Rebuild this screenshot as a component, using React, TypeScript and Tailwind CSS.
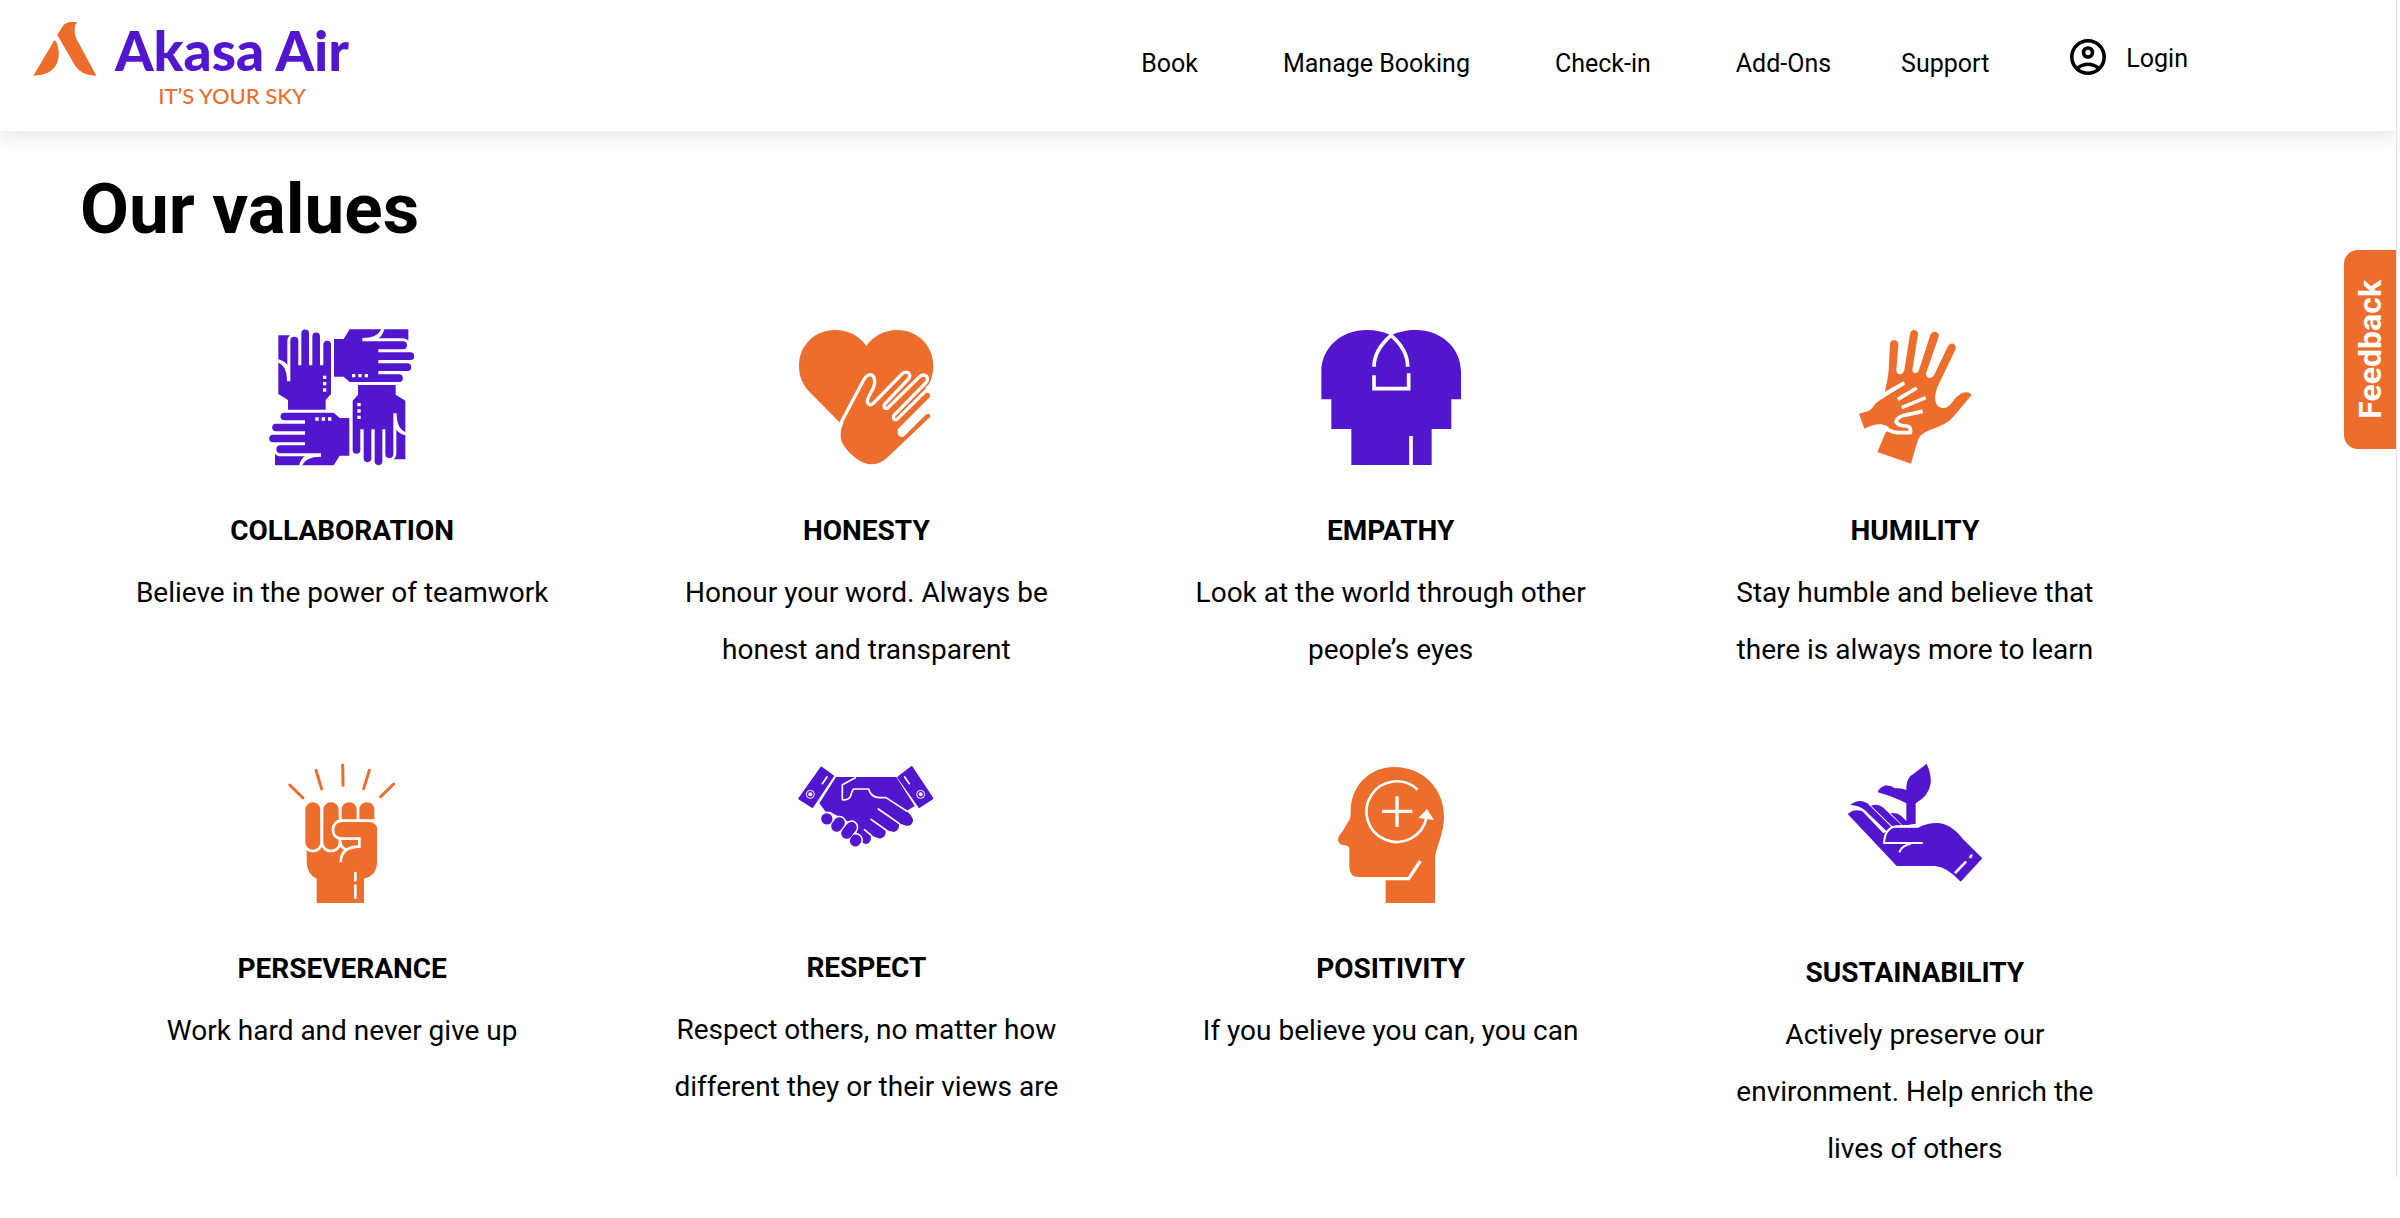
import type { ReactNode } from 'react';

const PURPLE = '#5316cf';
const ORANGE = '#ed6e2c';

const navLinks = ['Book', 'Manage Booking', 'Check-in', 'Add-Ons'];

const HandUp = ({ transform }: { transform?: string }) => (
    <g transform={transform}>
        <path d="M118 92a12 12 0 0 1 24 0V166H151V70a11.500 11.500 0 0 1 23 0V166H184V79a11.500 11.500 0 0 1 23 0V166H217V104a11.500 11.500 0 0 1 23 0V252L224 270V299H111V270L82 252V158Q108 168 108 214H118Z" />
        <path d="M82 76H117Q109 82 109 95V165Q100 153 82 148Z" />
        <path fill="#fff" d="M216 197h10v10h-10zM216 216h10v10h-10zM216 235h10v10h-10z" />
    </g>
);

const CollaborationIcon = () => (
    <svg viewBox="3 0 540 510" className="h-[170px] w-[180px]" fill={PURPLE} aria-hidden="true">
        <HandUp />
        <HandUp transform="rotate(90 286 262)" />
        <HandUp transform="rotate(180 272.5 262)" />
        <HandUp transform="rotate(-90 272 276)" />
    </svg>
);

const HonestyIcon = () => (
    <svg viewBox="-12 0 540 510" className="h-[170px] w-[180px]" fill={ORANGE} aria-hidden="true">
        <path d="M57 168C57 105 105 60 165 60C207 60 239 79 259 108C279 79 312 60 352 60C412 60 460 106 460 168C460 190 455 207 447 222L340 320L180 338L88 245C67 224 57 198 57 168Z" />
        <path d="M190 340L252 212L300 270L377 200L432 205L440 248Q453 248 450 261L353 358Q350 384 370 381L437 314Q450 306 451 320L318 446Q275 480 230 446Q180 408 182 374Q182 355 190 340Z" />
        <path
            fill="none"
            stroke="#fff"
            strokeWidth="10"
            strokeLinejoin="round"
            d="M182 340L251 210Q260 194 273 194Q285 198 284 218C283 240 261 258 262 275Q267 291 281 279L364 194Q374 182 386 189Q393 197 385 207L313 284Q309 295 321 296L416 203Q428 190 440 199Q446 209 437 219L341 317Q338 331 350 329L446 234"
        />
    </svg>
);

const EmpathyIcon = () => (
    <svg viewBox="0 0 540 510" className="h-[170px] w-[180px]" fill={PURPLE} aria-hidden="true">
        <path d="M61 268V185C61 112 122 60 197 60C225 60 250 66 270 76C290 66 317 60 345 60C418 60 480 112 480 185V268H451V357H392V465H151V357H91V268Z" />
        <g fill="none" stroke="#fff" strokeWidth="11">
            <path d="M219 170C219 134 238 104 270 76C303 104 320 134 320 170M219 196V236H323V190M330 378V466" />
        </g>
    </svg>
);

const HumilityIcon = () => (
    <svg viewBox="-15 0 540 510" className="h-[170px] w-[180px]" fill={ORANGE} aria-hidden="true">
        <path d="M142 426L168 365L164 247Q174 205 176 180L180 102Q182 90 192 90Q205 91 205 104L199 180Q200 193 210 193Q220 192 223 180L240 72Q243 59 253 60Q264 62 264 73L247 180Q248 190 256 190Q263 190 267 180L301 74Q307 63 318 66Q328 70 326 80L288 190Q288 204 300 204Q308 204 312 196L354 108Q362 98 372 102Q380 109 376 119L325 225C306 268 318 294 340 294Q355 294 367 276Q390 245 410 247Q420 248 425 254Q400 285 366 325Q350 343 300 360Q268 372 263 392L243 461Z" />
        <path fill="#fff" d="M140 262L164 247L222 214L224 224L165 262L180 340L170 366L140 366Z" />
        <path d="M87 311L118 302Q127 295 138 279Q150 270 165 261L215 232L260 300L220 340L240 362L190 362Q170 343 148 343Q130 343 103 356Z" />
        <g fill="none" stroke="#fff" strokeWidth="11">
            <path d="M164 252L222 219M203 268L260 234M215 293L287 263" />
            <path strokeLinejoin="round" d="M148 348Q165 350 178 361Q190 368 205 368H241Q244 350 230 348Q205 348 198 336Q200 322 222 316L278 304" />
        </g>
    </svg>
);

const PerseveranceIcon = () => (
    <svg viewBox="-27 0 540 504" className="h-[168px] w-[180px]" fill={ORANGE} aria-hidden="true">
        <g stroke={ORANGE} strokeWidth="9" strokeLinecap="round">
            <path d="M86 105L126 144M165 61L182 117M245 45L246 106M325 61L308 116M398 102L359 140" />
        </g>
        <path d="M137 292H245V217H325Q348 218 348 240V335Q348 376 309 386V459H167V386Q137 372 137 335Z" />
        <g stroke="#fff" strokeWidth="8">
            <rect x="129" y="153" width="53" height="150" rx="26" />
            <rect x="183" y="153" width="54" height="150" rx="26" />
            <path d="M238 213V179a26 26 0 0 1 53 0V213ZM291 213V179a26 26 0 0 1 53 0V213Z" />
        </g>
        <path d="M340 213H242Q216 216 216 240Q216 264 242 266H348V240Q347 217 325 217Z" />
        <path d="M238 268H300V310L248 300Z" />
        <path fill="none" stroke="#fff" strokeWidth="8" d="M341 212H242Q216 215 216 240Q216 263 240 266H295V290Q240 290 239 337M237 268Q237 296 258 300" />
        <path stroke="#fff" strokeWidth="8" strokeLinecap="round" d="M283 369V391M283 407V443" />
    </svg>
);

const RespectIcon = () => (
    <svg viewBox="-12 0 540 501" className="h-[167px] w-[180px]" fill={PURPLE} aria-hidden="true">
        <g stroke={PURPLE} strokeWidth="6" strokeLinejoin="round">
            <path d="M124 53L159 78L97 171L58 146ZM395 51L457 145L418 171L355 82Z" />
        </g>
        <path d="M168 81H349L404 168L380 183Q399 200 399 212Q396 229 378 227L357 220Q360 241 342 246Q330 246 317 238Q320 262 300 266Q288 264 272 254Q277 280 257 282Q243 280 240 262L205 215L150 185H137L118 160Z" />
        <g strokeLinecap="round">
            <path stroke="#fff" strokeWidth="42" d="M140 206L141 207M178 218L170 229M214 232L200 250M228 270L226 273" />
            <path stroke={PURPLE} strokeWidth="33" d="M140 206L141 207M178 218L170 229M214 232L200 250M228 270L226 273" />
        </g>
        <g fill="none" stroke="#fff" strokeWidth="5" strokeLinecap="round" strokeLinejoin="round">
            <path d="M226 83L187 104V149Q211 153 215 128L220 117H266Q272 141 297 143H318L380 183" />
            <path d="M295 177L358 221M273 208L318 240M253 239L274 256" />
            <path d="M141 81L127 101M374 81L388 101" />
        </g>
        <g fill="none" stroke="#fff" strokeWidth="3">
            <circle cx="91" cy="133" r="12" />
            <circle cx="422" cy="133" r="12" />
        </g>
        <circle cx="91" cy="133" r="6" fill="#fff" />
        <circle cx="422" cy="133" r="6" fill="#fff" />
    </svg>
);

const PositivityIcon = () => (
    <svg viewBox="-30 0 540 504" className="h-[168px] w-[180px]" fill={ORANGE} aria-hidden="true">
        <path d="M119 185C119 108 175 51 250 51C335 51 399 115 399 200C399 245 380 280 372 320V459H224V381H145Q115 381 115 350V295Q112 286 98 285Q80 284 81 267Q84 255 95 243L115 210Q119 203 119 185Z" />
        <g fill="none" stroke="#fff">
            <path strokeWidth="10" d="M215 386H293L328 333M213 184H304M258 139V231" />
            <path strokeWidth="8" d="M320 119A91 91 0 1 0 346 205" />
        </g>
        <path fill="#fff" d="M348 177L322 204L369 210Z" />
    </svg>
);

const SustainabilityIcon = () => (
    <svg viewBox="-15 0 540 516" className="h-[172px] w-[180px]" fill={PURPLE} aria-hidden="true">
        <path d="M229 224V160Q190 140 143 127Q147 112 168 106Q185 107 195 115Q215 113 229 120Q228 95 240 79Q250 72 290 41Q305 75 302 100Q297 138 257 160V222Z" />
        <path d="M53 192Q72 174 97 184L160 250L190 233H265Q290 219 320 219Q362 220 398 266L457 325L392 395Q350 350 315 348H200Z" />
        <path d="M61 165Q86 144 112 160L184 231L170 244L104 180Q88 166 61 165Z" />
        <path d="M123 167Q145 160 160 173L215 226L189 231Z" />
        <path d="M182 190Q202 187 214 198L240 224L217 226Z" />
        <g fill="none" stroke="#fff" strokeWidth="6" strokeLinecap="round" strokeLinejoin="round">
            <path d="M255 229H200Q165 232 162 279H276M209 305Q216 287 240 282" />
            <path strokeWidth="8" d="M377 367L406 337M421 321L424 317" />
        </g>
    </svg>
);

type Value = {
    title: string;
    description: string;
    icon: ReactNode;
};

const values: Value[] = [
    { title: 'COLLABORATION', description: 'Believe in the power of teamwork', icon: <CollaborationIcon /> },
    { title: 'HONESTY', description: 'Honour your word. Always be honest and transparent', icon: <HonestyIcon /> },
    { title: 'EMPATHY', description: 'Look at the world through other people’s eyes', icon: <EmpathyIcon /> },
    { title: 'HUMILITY', description: 'Stay humble and believe that there is always more to learn', icon: <HumilityIcon /> },
    { title: 'PERSEVERANCE', description: 'Work hard and never give up', icon: <PerseveranceIcon /> },
    { title: 'RESPECT', description: 'Respect others, no matter how different they or their views are', icon: <RespectIcon /> },
    { title: 'POSITIVITY', description: 'If you believe you can, you can', icon: <PositivityIcon /> },
    {
        title: 'SUSTAINABILITY',
        description: 'Actively preserve our environment. Help enrich the lives of others',
        icon: <SustainabilityIcon />,
    },
];

const Logo = () => (
    <a href="#home" className="flex items-start gap-[18px] font-['Lato',sans-serif]">
        <svg viewBox="99 66 190 162" className="h-[54px] w-[64px]" fill={ORANGE} aria-hidden="true">
            <path d="M99 227L160 124Q164 119 167 124C185 165 178 227 99 227Z" />
            <path d="M171 105L186 80Q196 66 212 66H230Q216 84 228 116L288 227Q245 228 225 198Z" />
        </svg>
        <span className="flex flex-col items-center">
            <span className="text-[55px] leading-[56px] font-black text-[#5316cf]">Akasa Air</span>
            <span className="text-[22px] leading-[36px] font-medium text-[#ed6e2c]">IT’S YOUR SKY</span>
        </span>
    </a>
);

const Header = () => (
    <header className="flex h-[131px] items-start justify-between bg-white pr-[208px] pl-[33px] shadow-[0_4px_20px_rgba(0,0,0,0.12)]">
        <div className="pt-[22px]">
            <Logo />
        </div>
        <div className="flex items-start pt-[39px] text-[25px] leading-[40px]">
            <nav className="flex items-center gap-[70px] pt-[5px]">
                <ul className="flex items-center gap-[85px]">
                    {navLinks.map((link) => (
                        <li key={link}>
                            <a href="#nav">{link}</a>
                        </li>
                    ))}
                </ul>
                <a href="#support">Support</a>
            </nav>
            <button type="button" className="ml-[81px] flex items-start gap-5">
                <svg viewBox="2 2 20 20" className="size-9" aria-hidden="true">
                    <path d="M12 2C6.480 2 2 6.480 2 12s4.480 10 10 10 10-4.480 10-10S17.520 2 12 2zM7.350 18.500C8.660 17.560 10.260 17 12 17s3.340.560 4.650 1.500c-1.310.940-2.910 1.500-4.650 1.500s-3.340-.560-4.650-1.500zm10.790-1.380a9.947 9.947 0 0 0-12.280 0A7.957 7.957 0 0 1 4 12c0-4.420 3.580-8 8-8s8 3.580 8 8c0 1.950-.700 3.730-1.860 5.120z" />
                    <path d="M12 6c-1.930 0-3.500 1.570-3.500 3.500S10.070 13 12 13s3.500-1.570 3.500-3.500S13.930 6 12 6zm0 5c-.830 0-1.500-.670-1.500-1.500S11.170 8 12 8s1.500.670 1.500 1.500S12.830 11 12 11z" />
                </svg>
                Login
            </button>
        </div>
    </header>
);

const ValueCard = ({ title, description, icon }: Value) => (
    <li className="flex flex-col items-center px-[54px] text-center">
        {icon}
        <h2 className="mt-[31px] text-[28px] leading-[40px] font-bold">{title}</h2>
        <p className="mt-[13px] text-[28px] leading-[57px]">{description}</p>
    </li>
);

export default function App() {
    return (
        <div className="relative flex bg-white font-['Roboto',sans-serif] text-black">
            <div className="min-w-0 flex-1 overflow-hidden">
                <Header />
                <main className="pt-[38px] pr-[219px] pl-20">
                    <h1 className="text-[71px] leading-[80px] font-bold">Our values</h1>
                    <ul className="mt-[61px] grid grid-cols-4 gap-y-[72px]">
                        {values.map((value) => (
                            <ValueCard key={value.title} {...value} />
                        ))}
                    </ul>
                </main>
            </div>
            <div className="w-1 border-l border-[#e4e4e4] bg-[#fafafa]" />
            <button
                type="button"
                className="absolute top-[250px] right-1 flex h-[199px] w-[52px] items-center justify-center rounded-l-[14px] bg-[#ed6e2c] text-[32px] font-bold text-white"
            >
                <span className="rotate-180 [writing-mode:vertical-rl]">Feedback</span>
            </button>
        </div>
    );
}
